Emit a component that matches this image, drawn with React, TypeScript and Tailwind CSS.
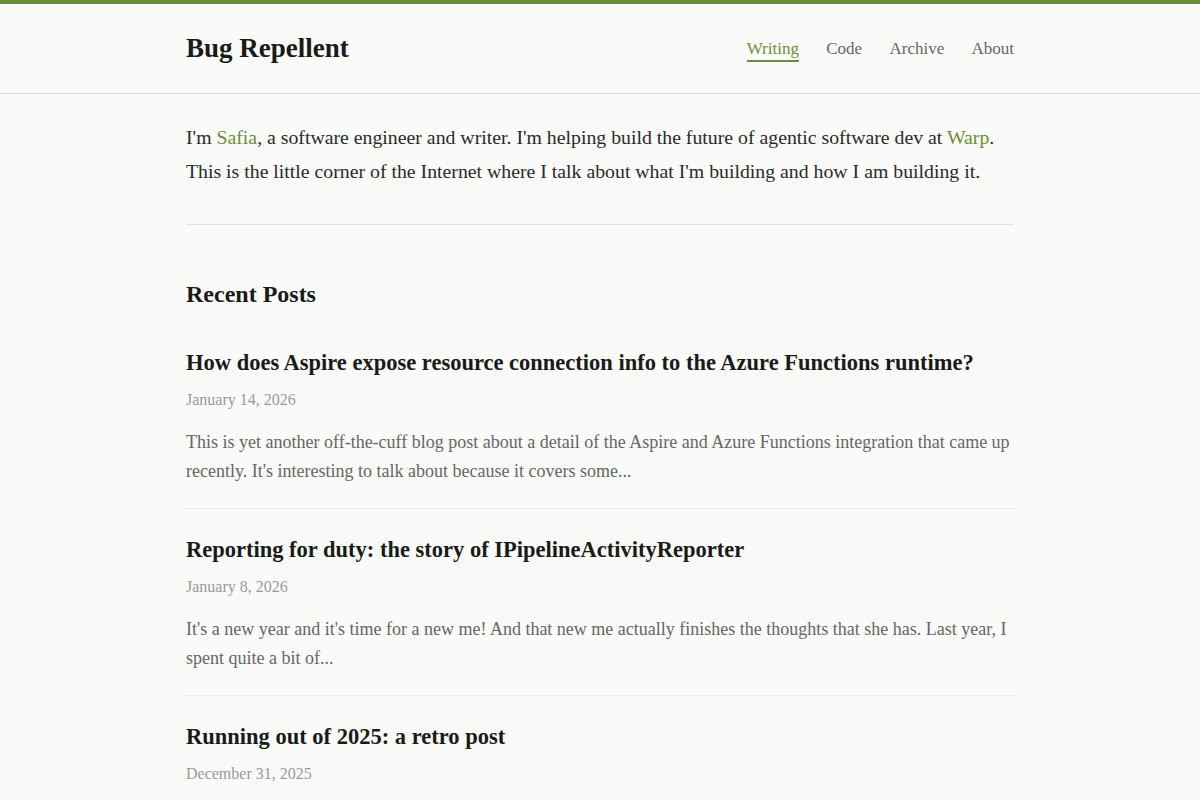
import React from 'react';

const posts = [
  {
    title: 'How does Aspire expose resource connection info to the Azure Functions runtime?',
    date: 'January 14, 2026',
    excerpt:
      "This is yet another off-the-cuff blog post about a detail of the Aspire and Azure Functions integration that came up recently. It's interesting to talk about because it covers some...",
  },
  {
    title: 'Reporting for duty: the story of IPipelineActivityReporter',
    date: 'January 8, 2026',
    excerpt:
      "It's a new year and it's time for a new me! And that new me actually finishes the thoughts that she has. Last year, I spent quite a bit of...",
  },
  {
    title: 'Running out of 2025: a retro post',
    date: 'December 31, 2025',
    excerpt: '',
  },
];

const navItems = ['Writing', 'Code', 'Archive', 'About'];

export default function App() {
  return (
    <div className="min-h-screen bg-[#fafaf9] text-[#1a1a1a] font-['Liberation_Serif',serif]">
      <div className="h-[4px] bg-[#6b8e3a]" />

      {/* Header */}
      <header className="border-b border-[#dcdcdc]">
        <div className="mx-auto w-[828px] h-[89px] flex items-center justify-between">
          <h1 className="text-[27px] font-bold leading-none">Bug Repellent</h1>
          <nav className="flex items-center gap-[27.3px] text-[17px] text-[#666]">
            {navItems.map((item) => (
              <a
                key={item}
                className={
                  item === 'Writing'
                    ? 'text-[#6b8e3a] border-b-2 border-[#6b8e3a] leading-[22px] mt-[2px]'
                    : 'leading-[22px]'
                }
              >
                {item}
              </a>
            ))}
          </nav>
        </div>
      </header>

      <main className="mx-auto w-[828px] pt-[26px]">
        {/* Intro */}
        <p className="text-[19.8px] leading-[34px] text-[#2a2a2a]">
          I'm <a className="text-[#6b8e3a]">Safia</a>, a software engineer and writer. I'm helping build the
          future of agentic software dev at <a className="text-[#6b8e3a]">Warp</a>. This is the little corner of
          the Internet where I talk about what I'm building and how I am building it.
        </p>

        <hr className="mt-[36px] border-0 border-t border-[#e2e2e0]" />

        <h2 className="mt-[54px] text-[24px] font-bold leading-[31px]">Recent Posts</h2>

        <div className="mt-[39px]">
          {posts.map((post, i) => (
            <article key={post.title} className={i > 0 ? 'border-t border-[#ebebe9] pt-[27px]' : ''}>
              <h3 className="text-[22.5px] font-bold leading-[28px]">{post.title}</h3>
              <div className="mt-[10.5px] text-[16px] leading-[24px] text-[#999]">{post.date}</div>
              {post.excerpt && (
                <p className="mt-[16px] mb-[22.5px] text-[18px] leading-[29px] text-[#666]">{post.excerpt}</p>
              )}
            </article>
          ))}
        </div>
      </main>
    </div>
  );
}
